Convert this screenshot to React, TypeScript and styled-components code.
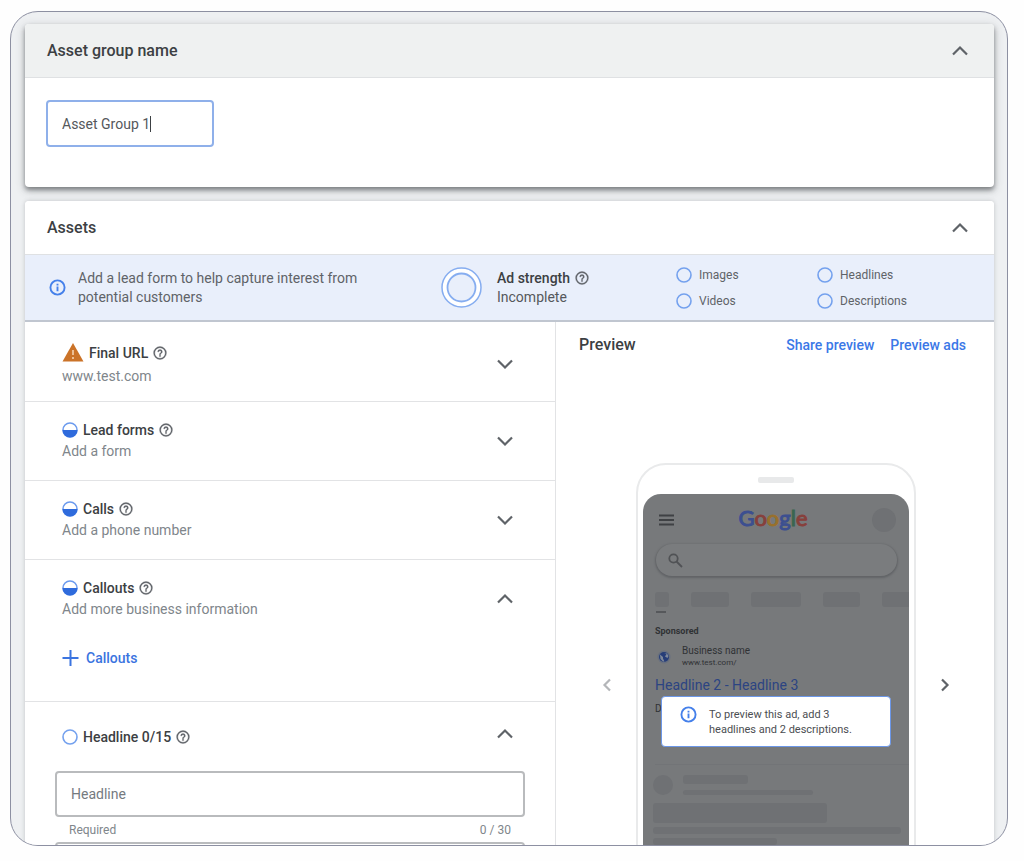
import React, { useState } from "react";
import styled, { createGlobalStyle } from "styled-components";

const GlobalStyle = createGlobalStyle`
  *, *::before, *::after { box-sizing: border-box; }
  body { margin: 0; background: #fefefe; color: #3c4043; font: 400 14px/20px Roboto, "Liberation Sans", sans-serif; }
  button, input { font: inherit; color: inherit; }
  h2, h3, p { margin: 0; font: inherit; }
`;

const Page = styled.div`
  height: 100vh;
  min-height: 600px;
  padding: 11px 16px 15px 10px;
`;

const Frame = styled.main`
  height: 100%;
  overflow: hidden;
  padding: 12px 13px 0 14px;
  border: 1px solid #8d90a2;
  border-radius: 28px;
  background: #eef0f2;
  display: flex;
  flex-direction: column;
  gap: 14px;
`;

const Card = styled.section<{ $raised?: boolean }>`
  flex: none;
  border-radius: 4px;
  background: #fff;
  box-shadow: ${(p) =>
    p.$raised
      ? "0 3px 4px rgba(60,64,67,.5), 0 3px 10px rgba(60,64,67,.3)"
      : "0 0 4px rgba(60,64,67,.25)"};
`;

const CardHeader = styled.header<{ $shaded?: boolean }>`
  height: 54px;
  padding: 0 24px 0 22px;
  display: flex;
  align-items: center;
  justify-content: space-between;
  border-bottom: 1px solid #dfe1e3;
  border-radius: 4px 4px 0 0;
  background: ${(p) => (p.$shaded ? "#eff1f1" : "#fff")};
`;

const CardTitle = styled.h2`
  font-size: 16px;
  font-weight: 500;
`;

const IconButton = styled.button`
  flex: none;
  width: 20px;
  height: 20px;
  padding: 0;
  border: 0;
  background: none;
  display: grid;
  place-items: center;
  color: #5f6368;
  &:disabled { color: #b4b6b9; }
`;

const NameBody = styled.div`
  padding: 22px 21px 40px;
`;

const NameField = styled.label`
  width: 168px;
  height: 47px;
  padding: 0 14px;
  display: flex;
  align-items: center;
  border: 2px solid #8fb0ea;
  border-radius: 4px;
`;

const NameInput = styled.input`
  field-sizing: content;
  min-width: 0;
  padding: 0;
  border: 0;
  outline: 0;
  background: none;
  color: #55585c;
`;

const Caret = styled.span`
  width: 1px;
  height: 16px;
  background: #3c4043;
`;

const Banner = styled.div`
  height: 67px;
  padding: 0 24px;
  display: grid;
  grid-template-columns: 392fr 235fr 141fr 153fr;
  align-items: center;
  background: #e9effb;
  border-bottom: 2px solid #c0c6d0;
`;

const Tip = styled.div`
  display: flex;
  align-items: center;
  gap: 12px;
  color: #5f6368;
  p { width: 290px; line-height: 19px; }
`;

const Strength = styled.div`
  display: flex;
  align-items: center;
  gap: 15px;
  line-height: 19px;
`;

const StrengthLevel = styled.div`
  color: #55585c;
`;

const Checks = styled.ul`
  margin: 0;
  padding: 0;
  list-style: none;
  font-size: 12px;
  color: #5f6368;
`;

const Check = styled.li`
  height: 26px;
  display: flex;
  align-items: center;
  gap: 7px;
`;

const TitleLine = styled.h3<{ $tall?: boolean }>`
  height: ${(p) => (p.$tall ? 24 : 20)}px;
  display: flex;
  align-items: center;
  gap: 5px;
  font-weight: 500;
`;

const Columns = styled.div`
  display: grid;
  grid-template-columns: 531fr 438fr;
`;

const AssetList = styled.div`
  border-right: 1px solid #e2e3e5;
`;

const AssetRow = styled.section`
  border-bottom: 1px solid #e2e3e5;
`;

const RowHead = styled.div<{ $tall?: boolean }>`
  height: ${(p) => (p.$tall ? 79 : 78)}px;
  padding: ${(p) => (p.$tall ? 4 : 0)}px 40px 0 37px;
  display: flex;
  align-items: center;
  justify-content: space-between;
`;

const Subtitle = styled.p`
  line-height: 22px;
  color: #80868b;
`;

const AddButton = styled.button`
  margin: 10px 0 33px 37px;
  padding: 0;
  height: 20px;
  border: 0;
  background: none;
  display: flex;
  align-items: center;
  gap: 7px;
  color: #3b74e0;
  font-weight: 500;
`;

const HeadlineHead = styled(RowHead)`
  height: 69px;
  ${IconButton} { margin-bottom: 6px; }
`;

const HeadlineField = styled.div`
  padding: 0 30px 0 30px;
`;

const TextInput = styled.input`
  display: block;
  width: 100%;
  height: 46px;
  padding: 0 14px;
  border: 2px solid #b9bbbd;
  border-radius: 4px;
  outline: 0;
  background: #fff;
  &::placeholder { color: #757a7f; opacity: 1; }
`;

const Hint = styled.div`
  height: 25px;
  padding: 0 14px;
  display: flex;
  align-items: center;
  justify-content: space-between;
  font-size: 12px;
  line-height: 16px;
  color: #80868b;
`;

const PreviewPane = styled.div`
  min-width: 0;
`;

const PreviewHeader = styled.div`
  padding: 13px 28px 0 23px;
  display: flex;
  align-items: center;
  gap: 16px;
  h3 { flex: 1; font-size: 16px; font-weight: 500; }
`;

const TextLink = styled.a`
  color: #3b78e7;
  font-weight: 500;
  text-decoration: none;
`;

const Carousel = styled.div`
  padding: 108px 39px 0 41px;
  display: flex;
  justify-content: space-between;
  align-items: flex-start;
  > ${IconButton} { margin-top: 212px; }
`;

const Phone = styled.div`
  width: 280px;
  height: 440px;
  padding: 0 5px;
  border: 2px solid #e9eaeb;
  border-radius: 30px;
  background: #fff;
`;

const Speaker = styled.div`
  width: 36px;
  height: 6px;
  margin: 12px auto 11px;
  border-radius: 2px;
  background: #e8e9ea;
`;

const Screen = styled.div`
  position: relative;
  height: 410px;
  padding: 14px 0 0 12px;
  overflow: hidden;
  border-radius: 18px 18px 0 0;
  background: #77797b;
  color: #303235;
`;

const AppBar = styled.div`
  height: 24px;
  padding: 0 13px 0 4px;
  display: flex;
  align-items: center;
  justify-content: space-between;
`;

const Logo = styled.div`
  padding-bottom: 4px;
  font: 400 22px/20px Lato, sans-serif;
  -webkit-text-stroke: 1px;
`;

const Letter = styled.span<{ $c: string }>`
  color: ${(p) => p.$c};
`;

const Shape = styled.div<{ $w: number | string; $h: number; $r?: number }>`
  flex: none;
  width: ${(p) => (typeof p.$w === "number" ? p.$w + "px" : p.$w)};
  height: ${(p) => p.$h}px;
  border-radius: ${(p) => p.$r ?? 3}px;
  background: #6f7174;
`;

const SearchPill = styled.div`
  height: 32px;
  margin: 12px 12px 0 1px;
  padding: 0 12px;
  display: flex;
  align-items: center;
  border-radius: 16px;
  background: #7a7c7e;
  box-shadow: 0 1px 2px 1px #626467;
  color: #505255;
`;

const Tabs = styled.div`
  margin-top: 16px;
  display: flex;
  gap: 22px;
`;

const TabMark = styled.div`
  width: 10px;
  height: 2px;
  margin: 4px 0 0 1px;
  background: #56585b;
`;

const Sponsored = styled.div`
  margin-top: 12px;
  font-size: 9px;
  line-height: 12px;
  font-weight: 700;
`;

const Business = styled.div`
  height: 24px;
  margin-top: 8px;
  padding-left: 2px;
  display: flex;
  align-items: center;
  gap: 11px;
  font-size: 10px;
  line-height: 12px;
  small { display: block; font-size: 8px; }
`;

const AdHeadline = styled.div`
  margin-top: 6px;
  font-size: 14px;
  line-height: 20px;
  color: #2c4482;
`;

const AdBody = styled.div`
  height: 70px;
  padding-top: 4px;
  font-size: 10px;
  border-bottom: 1px solid #727477;
`;

const Skeleton = styled.div`
  margin: 10px 0 0 -2px;
  display: flex;
  align-items: center;
  gap: 10px;
`;

const Bars = styled.div`
  display: flex;
  flex-direction: column;
  gap: 6px;
`;

const Blocks = styled.div`
  margin: 8px 8px 0 -2px;
  display: flex;
  flex-direction: column;
  gap: 4px;
`;

const Notice = styled.div`
  position: absolute;
  top: 202px;
  left: 18px;
  right: 18px;
  height: 51px;
  padding: 0 18px;
  display: flex;
  gap: 12px;
  border: 1px solid #6c97e8;
  border-radius: 4px;
  background: #fff;
  font-size: 11px;
  line-height: 15px;
  color: #4b4e52;
  svg { flex: none; margin-top: 9px; }
  p { margin-top: 10px; white-space: nowrap; }
`;

function Chevron({ dir }: { dir: "up" | "down" | "left" | "right" }) {
  const paths = {
    up: "M3 13.5 10 6.5 17 13.5",
    down: "M3 6.5 10 13.5 17 6.5",
    left: "M13 4.5 7.5 10 13 15.5",
    right: "M7 4.5 12.5 10 7 15.5",
  };
  return (
    <svg width="20" height="20" viewBox="0 0 20 20" fill="none" stroke="currentColor" strokeWidth="2.2" aria-hidden="true">
      <path d={paths[dir]} />
    </svg>
  );
}

function Help() {
  return (
    <svg width="14" height="14" viewBox="0 0 24 24" fill="#5f6368" stroke="#5f6368" strokeWidth=".6" aria-hidden="true">
      <path d="M11 18h2v-2h-2v2zm1-17a11 11 0 1 0 0 22 11 11 0 0 0 0-22zm0 20a9 9 0 1 1 0-18 9 9 0 0 1 0 18zm0-15a4 4 0 0 0-4 4h2a2 2 0 1 1 4 0c0 2-3 1.8-3 5h2c0-2.300 3-2.500 3-5a4 4 0 0 0-4-4z" />
    </svg>
  );
}

function Info({ size }: { size: number }) {
  return (
    <svg width={size} height={size} viewBox="0 0 18 18" fill="none" stroke="#4580ea" strokeWidth="2" aria-hidden="true">
      <circle cx="9" cy="9" r="7.5" />
      <path d="M9 8v5M9 5v2" />
    </svg>
  );
}

function HalfCircle() {
  return (
    <svg width="16" height="16" viewBox="0 0 16 16" aria-hidden="true">
      <circle cx="8" cy="8" r="7" fill="#fff" stroke="#6b9aee" strokeWidth="1.500" />
      <path d="M.5 8a7.500 7.500 0 0 0 15 0z" fill="#2f6bdc" />
    </svg>
  );
}

function Ring() {
  return (
    <svg width="16" height="16" viewBox="0 0 16 16" fill="none" aria-hidden="true">
      <circle cx="8" cy="8" r="7" stroke="#74a1ee" strokeWidth="1.600" />
    </svg>
  );
}

function Warning() {
  return (
    <svg width="22" height="19" viewBox="0 0 22 19" aria-hidden="true">
      <path d="M11 0 21.500 18.500H.5z" fill="#cb7328" />
      <path d="M11 7v5M11 14v2" stroke="#f0c7a0" strokeWidth="1.800" />
    </svg>
  );
}

function StrengthRing() {
  return (
    <svg width="41" height="41" viewBox="0 0 41 41" aria-hidden="true">
      <circle cx="20.500" cy="20.500" r="19.500" fill="#fff" stroke="#86adf0" strokeWidth="1.500" />
      <circle cx="20.500" cy="20.500" r="14" fill="#e9effb" stroke="#86adf0" strokeWidth="1.800" />
    </svg>
  );
}

type RowProps = {
  icon: React.ReactNode;
  title: string;
  subtitle: string;
  open?: boolean;
  tall?: boolean;
  children?: React.ReactNode;
};

function Asset({ icon, title, subtitle, open, tall, children }: RowProps) {
  return (
    <AssetRow>
      <RowHead $tall={tall}>
        <div>
          <TitleLine $tall={tall}>
            {icon}
            {title}
            <Help />
          </TitleLine>
          <Subtitle>{subtitle}</Subtitle>
        </div>
        <IconButton type="button" aria-label={title} aria-expanded={!!open}>
          <Chevron dir={open ? "up" : "down"} />
        </IconButton>
      </RowHead>
      {children}
    </AssetRow>
  );
}

const googleLetters: [string, string][] = [
  ["G", "#3c4f90"],
  ["o", "#87403c"],
  ["o", "#98702c"],
  ["g", "#3c4f90"],
  ["l", "#3a6650"],
  ["e", "#87403c"],
];

function PhonePreview() {
  return (
    <Phone>
      <Speaker />
      <Screen>
        <AppBar>
          <svg width="15" height="12" viewBox="0 0 15 12" stroke="#3f4144" strokeWidth="2" aria-hidden="true">
            <path d="M0 1.500h15M0 6h15M0 10.500h15" />
          </svg>
          <Logo>
            {googleLetters.map(([ch, c], i) => (
              <Letter key={i} $c={c}>{ch}</Letter>
            ))}
          </Logo>
          <Shape $w={24} $h={24} $r={12} />
        </AppBar>
        <SearchPill>
          <svg width="15" height="15" viewBox="0 0 15 15" fill="none" stroke="currentColor" strokeWidth="1.800" aria-hidden="true">
            <circle cx="5.500" cy="5.500" r="4.200" />
            <path d="M8.500 8.500 14 14" />
          </svg>
        </SearchPill>
        <Tabs>
          <Shape $w={14} $h={15} />
          <Shape $w={38} $h={15} />
          <Shape $w={50} $h={15} />
          <Shape $w={37} $h={15} />
          <Shape $w={30} $h={15} />
        </Tabs>
        <TabMark />
        <Sponsored>Sponsored</Sponsored>
        <Business>
          <svg width="14" height="14" viewBox="0 0 14 14" aria-hidden="true">
            <circle cx="7" cy="7" r="6.500" fill="#68707f" />
            <circle cx="7" cy="7" r="5" fill="#263d78" />
            <path d="M3 4.500 6 7v1.500l1.500 3H6L3.500 9zM7 3l2.500 1L8 6.500l2.500 1.500 1-2L10 3.500z" fill="#7e8899" />
          </svg>
          <div>
            Business name
            <small>www.test.com/</small>
          </div>
        </Business>
        <AdHeadline>Headline 2 - Headline 3</AdHeadline>
        <AdBody>D</AdBody>
        <Skeleton>
          <Shape $w={20} $h={20} $r={10} />
          <Bars>
            <Shape $w={65} $h={9} />
            <Shape $w={130} $h={5} />
          </Bars>
        </Skeleton>
        <Blocks>
          <Shape $w="70%" $h={20} />
          <Shape $w="100%" $h={7} />
          <Shape $w="50%" $h={7} />
        </Blocks>
        <Notice>
          <Info size={17} />
          <p>
            To preview this ad, add 3<br />
            headlines and 2 descriptions.
          </p>
        </Notice>
      </Screen>
    </Phone>
  );
}

export default function App() {
  const [name, setName] = useState("Asset Group 1");
  const [headline, setHeadline] = useState("");
  return (
    <Page>
      <GlobalStyle />
      <Frame>
        <Card $raised>
          <CardHeader $shaded>
            <CardTitle>Asset group name</CardTitle>
            <IconButton type="button" aria-label="Collapse asset group name"><Chevron dir="up" /></IconButton>
          </CardHeader>
          <NameBody>
            <NameField>
              <NameInput aria-label="Asset group name" value={name} onChange={(e) => setName(e.target.value)} />
              <Caret />
            </NameField>
          </NameBody>
        </Card>

        <Card>
          <CardHeader>
            <CardTitle>Assets</CardTitle>
            <IconButton type="button" aria-label="Collapse assets"><Chevron dir="up" /></IconButton>
          </CardHeader>
          <Banner>
            <Tip>
              <Info size={17} />
              <p>Add a lead form to help capture interest from potential customers</p>
            </Tip>
            <Strength>
              <StrengthRing />
              <div>
                <TitleLine>Ad strength <Help /></TitleLine>
                <StrengthLevel>Incomplete</StrengthLevel>
              </div>
            </Strength>
            <Checks>
              <Check><Ring />Images</Check>
              <Check><Ring />Videos</Check>
            </Checks>
            <Checks>
              <Check><Ring />Headlines</Check>
              <Check><Ring />Descriptions</Check>
            </Checks>
          </Banner>
          <Columns>
            <AssetList>
              <Asset tall icon={<Warning />} title="Final URL" subtitle="www.test.com" />
              <Asset icon={<HalfCircle />} title="Lead forms" subtitle="Add a form" />
              <Asset icon={<HalfCircle />} title="Calls" subtitle="Add a phone number" />
              <Asset icon={<HalfCircle />} title="Callouts" subtitle="Add more business information" open>
                <AddButton type="button">
                  <svg width="17" height="16" viewBox="0 0 17 16" stroke="currentColor" strokeWidth="2" aria-hidden="true">
                    <path d="M8.500 0v16M.5 8h16" />
                  </svg>
                  Callouts
                </AddButton>
              </Asset>
              <section>
                <HeadlineHead>
                  <TitleLine><Ring />Headline 0/15<Help /></TitleLine>
                  <IconButton type="button" aria-label="Collapse headlines"><Chevron dir="up" /></IconButton>
                </HeadlineHead>
                <HeadlineField>
                  <TextInput aria-label="Headline" placeholder="Headline" value={headline} onChange={(e) => setHeadline(e.target.value)} />
                  <Hint><span>Required</span><span>{headline.length} / 30</span></Hint>
                  <TextInput aria-label="Second headline" />
                </HeadlineField>
              </section>
            </AssetList>
            <PreviewPane>
              <PreviewHeader>
                <h3>Preview</h3>
                <TextLink href="#share">Share preview</TextLink>
                <TextLink href="#ads">Preview ads</TextLink>
              </PreviewHeader>
              <Carousel>
                <IconButton type="button" aria-label="Previous" disabled><Chevron dir="left" /></IconButton>
                <PhonePreview />
                <IconButton type="button" aria-label="Next"><Chevron dir="right" /></IconButton>
              </Carousel>
            </PreviewPane>
          </Columns>
        </Card>
      </Frame>
    </Page>
  );
}
